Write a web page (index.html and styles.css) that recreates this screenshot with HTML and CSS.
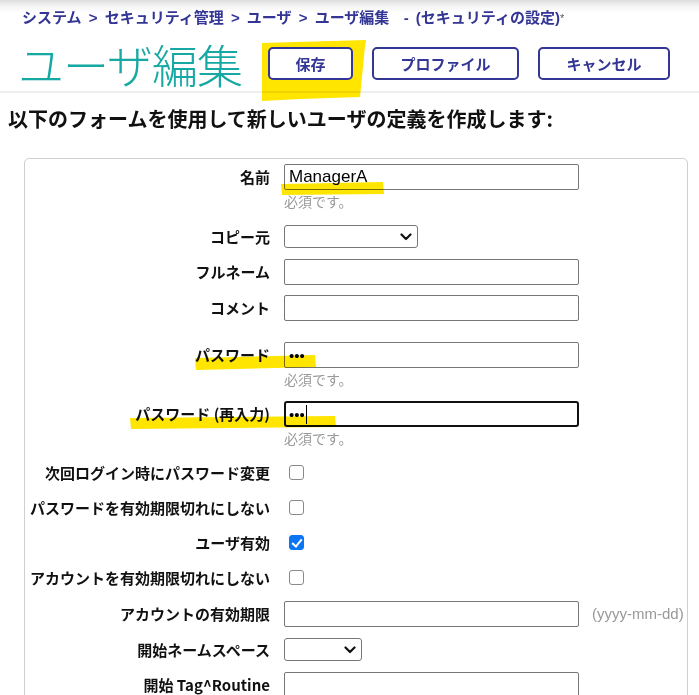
FILE: index.html
```html
<!DOCTYPE html>
<html lang="ja">
<head>
<meta charset="utf-8">
<title>ユーザ編集</title>
<link rel="stylesheet" href="styles.css">
</head>
<body>
<header class="header">
  <div class="crumbs">システム &gt; セキュリティ管理 &gt; ユーザ &gt; ユーザ編集 &nbsp;- (セキュリティの設定)<span class="star">*</span></div>
  <div class="titlebar">
    <h1 class="title">ユーザ編集</h1>
    <div class="buttons">
      <button class="btn btn-save">保存</button>
      <button class="btn btn-profile">プロファイル</button>
      <button class="btn btn-cancel">キャンセル</button>
    </div>
  </div>
</header>

<h2 class="intro">以下のフォームを使用して新しいユーザの定義を作成します:</h2>

<div class="formbox">
  <div class="row r1">
    <label class="lbl">名前</label>
    <div class="field"><input class="txt" type="text" value="ManagerA"><div class="hint">必須です。</div></div>
  </div>
  <div class="row r2">
    <label class="lbl lbl-sel">コピー元</label>
    <div class="field">
      <div class="selwrap sel-wide">
        <select class="sel"><option></option></select>
        <svg class="chev" width="12" height="8" viewBox="0 0 12 8"><path d="M1.5 1.5 L6 6 L10.5 1.5" fill="none" stroke="#111" stroke-width="2.2" stroke-linecap="round" stroke-linejoin="round"/></svg>
      </div>
    </div>
  </div>
  <div class="row r3">
    <label class="lbl">フルネーム</label>
    <div class="field"><input class="txt" type="text"></div>
  </div>
  <div class="row r4">
    <label class="lbl">コメント</label>
    <div class="field"><input class="txt" type="text"></div>
  </div>
  <div class="row r5">
    <label class="lbl">パスワード</label>
    <div class="field"><input class="txt pw" type="password" value="abc"><div class="hint">必須です。</div></div>
  </div>
  <div class="row r6">
    <label class="lbl">パスワード (再入力)</label>
    <div class="field"><input class="txt pw focused" type="password" value="abc"><span class="caret"></span><div class="hint">必須です。</div></div>
  </div>
  <div class="row r7">
    <label class="lbl lbl-cb">次回ログイン時にパスワード変更</label>
    <div class="field cbfield"><input class="cb" type="checkbox"></div>
  </div>
  <div class="row r8">
    <label class="lbl lbl-cb">パスワードを有効期限切れにしない</label>
    <div class="field cbfield"><input class="cb" type="checkbox"></div>
  </div>
  <div class="row r8">
    <label class="lbl lbl-cb">ユーザ有効</label>
    <div class="field cbfield"><input class="cb" type="checkbox" checked></div>
  </div>
  <div class="row r8">
    <label class="lbl lbl-cb">アカウントを有効期限切れにしない</label>
    <div class="field cbfield"><input class="cb" type="checkbox"></div>
  </div>
  <div class="row r11">
    <label class="lbl">アカウントの有効期限</label>
    <div class="field"><input class="txt" type="text"></div>
    <div class="note">(yyyy-mm-dd)</div>
  </div>
  <div class="row r11">
    <label class="lbl lbl-sel">開始ネームスペース</label>
    <div class="field">
      <div class="selwrap sel-narrow">
        <select class="sel"><option></option></select>
        <svg class="chev" width="12" height="8" viewBox="0 0 12 8"><path d="M1.5 1.5 L6 6 L10.5 1.5" fill="none" stroke="#111" stroke-width="2.2" stroke-linecap="round" stroke-linejoin="round"/></svg>
      </div>
    </div>
  </div>
  <div class="row r11">
    <label class="lbl">開始 Tag^Routine</label>
    <div class="field"><input class="txt" type="text"></div>
  </div>
</div>

<svg class="marks" width="699" height="695" viewBox="0 0 699 695" aria-hidden="true">
  <path d="M262 43 L366 40 L365 46 L360 97 L300 99 L262 101 Z" fill="#ffe500"/>
  <path d="M281 184 L383 182 L384 194 L282 195 Z" fill="#ffe500"/>
  <path d="M195 358 L315 355 L316 367 L196 370 Z" fill="#ffe500"/>
  <path d="M130 418 L335 416 L336 427 L131 429 Z" fill="#ffe500"/>
</svg>
</body>
</html>
```

FILE: styles.css
```css
* { box-sizing: border-box; }

html, body {
  margin: 0;
  padding: 0;
  background: #fff;
}

body {
  position: relative;
  width: 699px;
  height: 695px;
  overflow: hidden;
  font-family: "Liberation Sans", "Noto Sans CJK JP", sans-serif;
  color: #000;
}

.header {
  background: linear-gradient(to bottom, #dcdcdc 0, #f4f4f4 6px, #ffffff 13px);
  border-bottom: 2px solid #eeeeee;
}

.crumbs {
  padding: 8px 0 0 22px;
  height: 28px;
  font-size: 15px;
  line-height: 20px;
  font-weight: bold;
  word-spacing: 3px;
  color: #333695;
  white-space: nowrap;
}

.star {
  font-weight: normal;
  font-size: 11px;
  vertical-align: top;
  color: #555;
}

.titlebar {
  display: flex;
  align-items: center;
  height: 63px;
  padding: 7px 0 0 18px;
}

.title {
  margin: 0;
  font-family: "Noto Sans CJK JP", sans-serif;
  font-weight: 300;
  font-size: 46px;
  line-height: 56px;
  color: #16a9a4;
  letter-spacing: -1px;
}

.buttons {
  display: flex;
  gap: 19px;
  margin-left: 26px;
  position: relative;
  z-index: 3;
}

.btn {
  height: 33px;
  border: 2px solid #333695;
  border-radius: 5px;
  background: #fff;
  color: #333695;
  font-family: "Noto Sans CJK JP", sans-serif;
  font-weight: bold;
  font-size: 15px;
  padding: 0;
}

.btn-save { width: 85px; }
.btn-profile { width: 147px; }
.btn-cancel { width: 132px; }

.intro {
  margin: 13px 0 0 0;
  padding-left: 8px;
  font-family: "Noto Sans CJK JP", sans-serif;
  font-size: 20px;
  line-height: 26px;
  font-weight: bold;
  color: #111;
  white-space: nowrap;
}

.formbox {
  margin: 26px 11px 0 24px;
  border: 1px solid #cfcfcf;
  border-radius: 5px;
  padding: 5px 0 40px 0;
}

.row {
  display: grid;
  grid-template-columns: 245px 295px auto;
  column-gap: 14px;
  align-items: start;
}

.r2 { margin-top: 15px; }
.r3 { margin-top: 11px; }
.r4 { margin-top: 10px; }
.r5 { margin-top: 21px; }
.r6 { margin-top: 13px; }
.r7 { margin-top: 13px; }
.r8 { margin-top: 10px; }
.r11 { margin-top: 11px; }

.lbl {
  text-align: right;
  font-family: "Noto Sans CJK JP", sans-serif;
  font-weight: bold;
  font-size: 15px;
  line-height: 26px;
  color: #111;
  white-space: nowrap;
}

.lbl-sel { line-height: 23px; }
.lbl-cb { line-height: 25px; }

.field { position: relative; }

.txt {
  display: block;
  width: 295px;
  height: 26px;
  margin: 0;
  border: 1px solid #767676;
  border-radius: 2px;
  padding: 0 4px;
  font-family: "Liberation Sans", sans-serif;
  font-size: 17px;
  color: #000;
  background: #fff;
  outline: none;
}

.pw { font-size: 15px; letter-spacing: 0; }

.focused {
  border: 2px solid #111;
  border-radius: 3px;
  padding: 0 3px;
}

.caret {
  position: absolute;
  left: 22px;
  top: 4px;
  width: 1px;
  height: 19px;
  background: #000;
}

.hint {
  margin-top: 2px;
  font-family: "Noto Sans CJK JP", sans-serif;
  font-size: 14px;
  line-height: 18px;
  color: #999;
}

.selwrap {
  position: relative;
  height: 23px;
}

.sel {
  display: block;
  width: 100%;
  height: 23px;
  margin: 0;
  border: 1px solid #767676;
  border-radius: 3px;
  background: #fff;
  font-size: 14px;
  appearance: none;
  -webkit-appearance: none;
}

.chev {
  position: absolute;
  right: 6px;
  top: 8px;
  pointer-events: none;
}

.sel-wide { width: 134px; }
.sel-narrow { width: 78px; }

.cbfield {
  height: 25px;
  display: flex;
  align-items: center;
}

.cb {
  appearance: none;
  -webkit-appearance: none;
  position: relative;
  width: 15px;
  height: 15px;
  margin: 0 0 0 5px;
  border: 1px solid #8a8a8a;
  border-radius: 3px;
  background: #fff;
}

.cb:checked {
  background: #0b75f5;
  border-color: #0b75f5;
}

.cb:checked::after {
  content: "";
  position: absolute;
  left: 4px;
  top: 1px;
  width: 4px;
  height: 8px;
  border: solid #fff;
  border-width: 0 2px 2px 0;
  transform: rotate(40deg);
}

.note {
  font-family: "Liberation Sans", sans-serif;
  font-size: 15px;
  line-height: 26px;
  color: #999;
  margin-left: -1px;
}

.marks {
  position: absolute;
  left: 0;
  top: 0;
  pointer-events: none;
  mix-blend-mode: multiply;
  z-index: 2;
}
```
